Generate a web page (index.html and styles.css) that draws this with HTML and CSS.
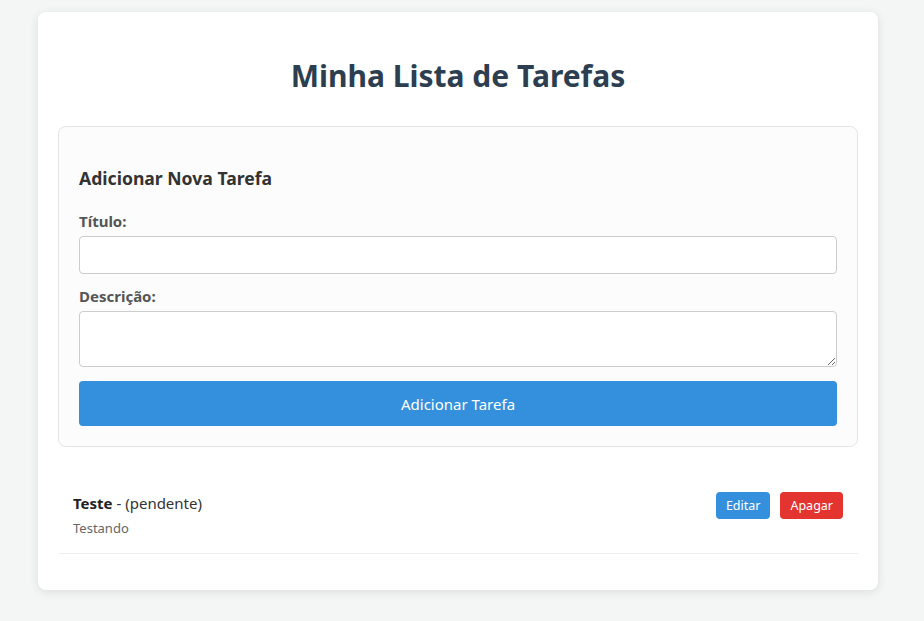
FILE: index.html
```html
<!DOCTYPE html>
<html lang="pt">
<head>
<meta charset="utf-8">
<title>Minha Lista de Tarefas</title>
<link rel="stylesheet" href="styles.css">
</head>
<body>
<div class="container">
  <h1 class="title">Minha Lista de Tarefas</h1>
  <form class="task-form">
    <h3 class="form-title">Adicionar Nova Tarefa</h3>
    <label class="field-label" for="titulo">Título:</label>
    <input class="field-input" id="titulo" type="text">
    <label class="field-label" for="descricao">Descrição:</label>
    <textarea class="field-textarea" id="descricao"></textarea>
    <button class="btn-add" type="button">Adicionar Tarefa</button>
  </form>
  <ul class="task-list">
    <li class="task-item">
      <div class="task-info">
        <div class="task-head"><strong>Teste</strong> - (pendente)</div>
        <div class="task-desc">Testando</div>
      </div>
      <div class="task-actions">
        <button class="btn-small btn-edit" type="button">Editar</button>
        <button class="btn-small btn-delete" type="button">Apagar</button>
      </div>
    </li>
  </ul>
</div>
</body>
</html>
```
FILE: styles.css
```css
* { box-sizing: border-box; }
html, body { margin: 0; padding: 0; }
body {
  background: #f4f5f5;
  font-family: "Segoe UI", "Noto Sans", "Open Sans", sans-serif;
  color: #333;
  padding: 12px 0 30px;
}
.container {
  width: 840px;
  margin: 0 0 0 38px;
  background: #fff;
  border-radius: 8px;
  box-shadow: 0 2px 10px rgba(0,0,0,0.1);
  padding: 20px;
}
.title {
  text-align: center;
  color: #2c3e50;
  font-size: 30px;
  font-weight: 700;
  margin: 23px 0 29px;
  line-height: 42px;
}
.task-form {
  background: #fcfcfc;
  border: 1px solid #e5e5e5;
  border-radius: 8px;
  padding: 20px;
  display: flex;
  flex-direction: column;
}
.form-title {
  margin: 19px 0 21px;
  font-size: 17.6px;
  font-weight: 700;
  color: #333;
  line-height: 24px;
}
.field-label {
  font-weight: 700;
  font-size: 15px;
  color: #555;
  line-height: 20px;
  margin-bottom: 5px;
}
.field-input, .field-textarea {
  width: 100%;
  border: 1px solid #ccc;
  border-radius: 4px;
  background: #fff;
  font-family: inherit;
  font-size: 15px;
  margin-bottom: 12px;
}
.field-input { height: 38px; padding: 8px; }
.field-textarea { height: 56px; padding: 8px; resize: vertical; margin-bottom: 14px; }
.btn-add {
  height: 45px;
  border: none;
  border-radius: 4px;
  background: #3490dc;
  color: #fff;
  font-family: inherit;
  font-size: 15px;
}
.task-list {
  list-style: none;
  padding: 0;
  margin: 30px 0 16px;
}
.task-item {
  display: flex;
  justify-content: space-between;
  align-items: flex-start;
  padding: 15px;
  border-bottom: 1px solid #eee;
}
.task-head {
  font-size: 15px;
  line-height: 22px;
  color: #333;
}
.task-head strong { color: #222; }
.task-desc {
  font-size: 13px;
  color: #666;
  line-height: 20px;
  margin-top: 4px;
}
.task-actions { display: flex; gap: 10px; }
.btn-small {
  height: 27px;
  border: none;
  border-radius: 4px;
  color: #fff;
  font-family: inherit;
  font-size: 12.5px;
  padding: 0 10px;
}
.btn-edit { background: #3490dc; }
.btn-delete { background: #e3342f; }
```
